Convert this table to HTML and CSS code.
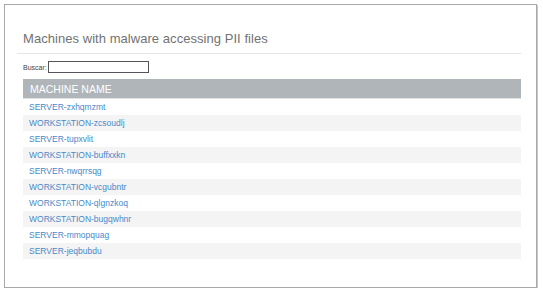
FILE: index.html
```html
<!DOCTYPE html>
<html>
<head>
<meta charset="utf-8">
<link rel="stylesheet" href="styles.css">
</head>
<body>
<div class="panel">
  <h2 class="title">Machines with malware accessing PII files</h2>
  <div class="content">
    <div class="search">
      <label class="search-label">Buscar:</label>
      <input class="search-input" type="text">
    </div>
    <table class="grid">
      <thead>
        <tr><th>MACHINE NAME</th></tr>
      </thead>
      <tbody>
        <tr><td><a href="#">SERVER-zxhqmzmt</a></td></tr>
        <tr><td><a href="#">WORKSTATION-zcsoudlj</a></td></tr>
        <tr><td><a href="#">SERVER-tupxvlit</a></td></tr>
        <tr><td><a href="#">WORKSTATION-buffxxkn</a></td></tr>
        <tr><td><a href="#">SERVER-nwqrrsqg</a></td></tr>
        <tr><td><a href="#">WORKSTATION-vcgubntr</a></td></tr>
        <tr><td><a href="#">WORKSTATION-qlgnzkoq</a></td></tr>
        <tr><td><a href="#">WORKSTATION-bugqwhnr</a></td></tr>
        <tr><td><a href="#">SERVER-mmopquag</a></td></tr>
        <tr><td><a href="#">SERVER-jeqbubdu</a></td></tr>
      </tbody>
    </table>
  </div>
</div>
</body>
</html>
```
FILE: styles.css
```css
html, body {
  margin: 0;
  padding: 0;
  background: #ffffff;
}
body {
  font-family: "Liberation Sans", Arial, sans-serif;
}
.panel {
  margin: 4px 0 0 4px;
  width: 533px;
  height: 284px;
  border: 1px solid #a8a8a8;
  box-shadow: 1px 1px 0 #c8c8c8;
  box-sizing: border-box;
  padding: 0 15px 0 12px;
}
.title {
  margin: 0;
  padding: 26px 0 0 6px;
  height: 22px;
  font-size: 13px;
  font-weight: normal;
  color: #727272;
  line-height: 15px;
  letter-spacing: 0.05px;
  border-bottom: 1px solid #e6e6e6;
}
.content {
  padding: 7px 0 0 6px;
}
.search {
  display: flex;
  align-items: center;
  height: 12px;
  margin-bottom: 6px;
}
.search-label {
  font-size: 7px;
  color: #444;
  margin-right: 1px;
}
.search-input {
  width: 101px;
  height: 12px;
  box-sizing: border-box;
  border: 1px solid #555;
  padding: 0;
  margin: 0;
}
.grid {
  width: 100%;
  border-collapse: collapse;
}
.grid th {
  background: #b0b5b9;
  color: #ffffff;
  font-weight: normal;
  font-size: 10.5px;
  text-align: left;
  height: 19px;
  padding: 0 0 0 7px;
  border-bottom: 1px solid #e0e0e0;
}
.grid td {
  height: 16px;
  padding: 0 0 0 6px;
  font-size: 8.5px;
}
.grid tbody tr:nth-child(even) td {
  background: #f4f4f4;
}
.grid a {
  color: #4a89c8;
  text-decoration: none;
}
```
